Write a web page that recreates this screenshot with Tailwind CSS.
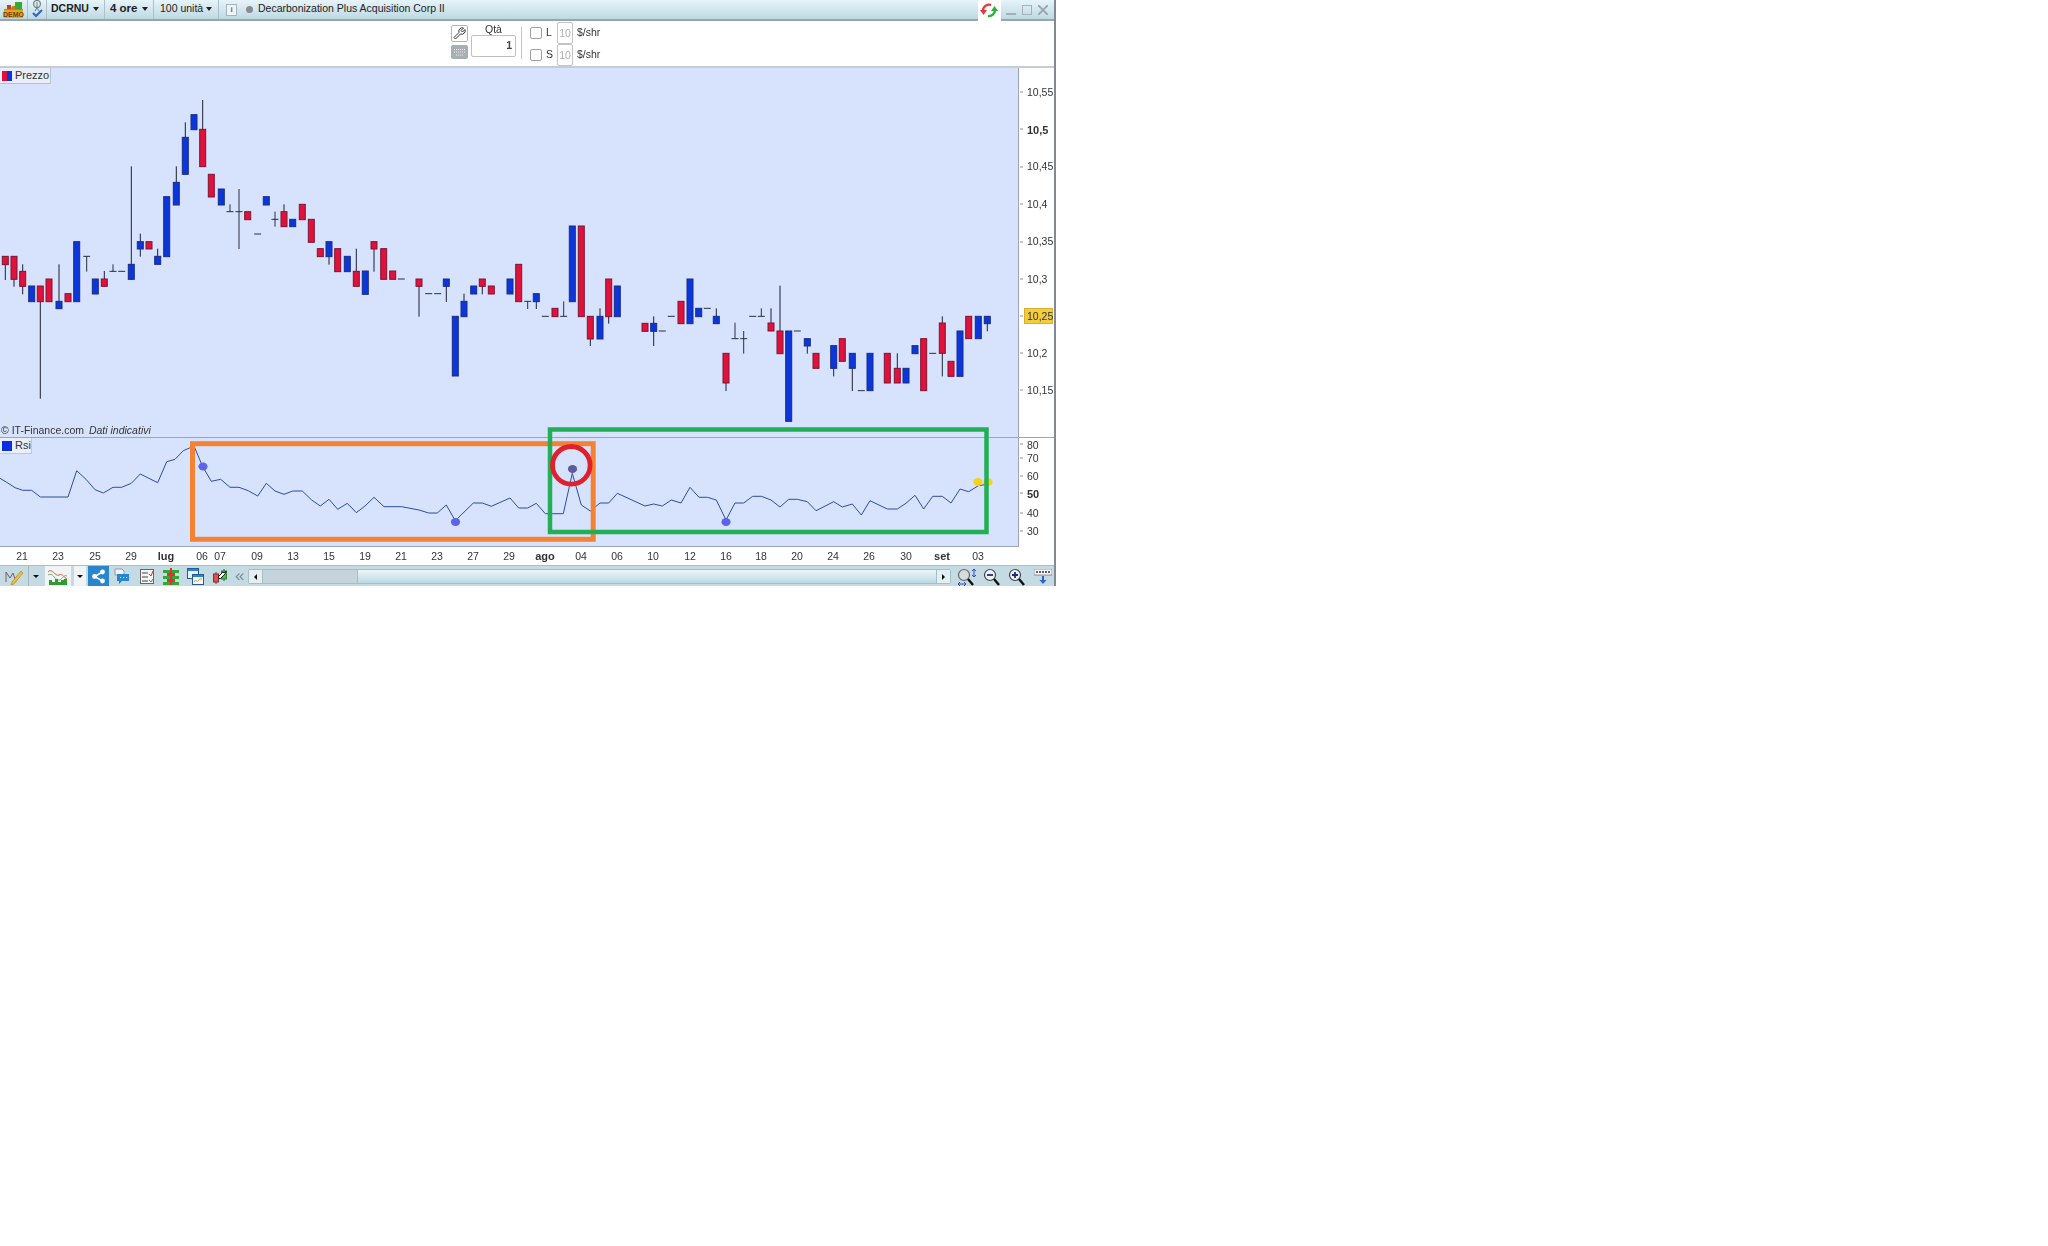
<!DOCTYPE html>
<html lang="it">
<head>
<meta charset="utf-8">
<title>DCRNU</title>
<script src="https://cdn.jsdelivr.net/npm/@tailwindcss/browser@4"></script>
</head>
<body class="bg-white font-['Liberation_Sans',Arial,sans-serif] text-[10.5px] text-[#333]">
<div class="relative w-[1056px] h-[586px] flex flex-col border-r-2 border-[#7f8a92] overflow-hidden blur-[0.35px]">

  <!-- title bar -->
  <div class="h-[21px] shrink-0 flex items-center bg-gradient-to-b from-[#e6f4f9] to-[#bed9e3] border-b-2 border-[#98a5ab] text-[#222]">
    <div class="w-[28px] h-full flex items-center justify-center border-r border-[#aebfc7]">
      <svg width="23" height="18" viewBox="0 0 23 18"><path d="M2 8h7l1-3h3v3h8v9H2z" fill="#b7851c"/><rect x="13" y="1" width="7" height="7" fill="#3aa63a"/><rect x="5" y="4" width="4" height="4" fill="#c83a2a"/><rect x="2" y="9" width="19" height="8" fill="#e0a818"/><text x="11.5" y="15.5" text-anchor="middle" font-size="7" font-weight="700" fill="#7a3a10">DEMO</text></svg>
    </div>
    <div class="w-[19px] h-full flex items-center justify-center border-r border-[#aebfc7]">
      <svg width="13" height="19" viewBox="0 0 13 19"><ellipse cx="6" cy="4" rx="3.4" ry="3.6" fill="none" stroke="#6e7a80" stroke-width="1.2"/><path d="M6 2v5M4 11l2-3 2 3" fill="none" stroke="#6e7a80"/><path d="M2 13l3 3 6-6" fill="none" stroke="#2d62c8" stroke-width="2"/></svg>
    </div>
    <div class="w-[58px] h-full flex items-center border-r border-[#aebfc7] pl-[4px] pb-[2px] font-bold">DCRNU<span class="ml-[4px] w-0 h-0 border-x-[3.5px] border-x-transparent border-t-[4px] border-t-[#222]"></span></div>
    <div class="w-[49px] h-full flex items-center border-r border-[#aebfc7] pl-[5px] pb-[2px] font-bold text-[11.5px]">4 ore<span class="ml-[4px] w-0 h-0 border-x-[3.5px] border-x-transparent border-t-[4px] border-t-[#222]"></span></div>
    <div class="w-[65px] h-full flex items-center border-r border-[#aebfc7] pl-[6px] pb-[2px]">100 unità<span class="ml-[3px] w-0 h-0 border-x-[3.5px] border-x-transparent border-t-[4px] border-t-[#222]"></span></div>
    <div class="ml-[7px] w-[11px] h-[12px] flex items-center justify-center border border-[#a8b4ba] bg-[#eef5f8] text-[8px] font-bold text-[#667]">i</div>
    <div class="ml-[9px] w-[7px] h-[7px] rounded-full bg-[#8a8a92]"></div>
    <div class="ml-[5px] pb-[2px] whitespace-nowrap">Decarbonization Plus Acquisition Corp II</div>
    <div class="flex-1"></div>
    <div class="w-[23px] h-[21px] -mb-[2px] bg-white flex items-center justify-center">
      <svg width="19" height="17" viewBox="0 0 19 17"><path d="M3 9a6 6 0 0 1 8-6" fill="none" stroke="#e23b3b" stroke-width="2.4"/><path d="M0 8h7l-3.5 5z" fill="#e23b3b"/><path d="M15 8a6 6 0 0 1-7 6" fill="none" stroke="#2bb03a" stroke-width="2.4"/><path d="M11 9h7l-3.500-5z" fill="#2bb03a"/></svg>
    </div>
    <div class="w-[5px]"></div>
    <svg width="10" height="10" viewBox="0 0 10 10"><rect x="0" y="8" width="10" height="2" fill="#a6b2b8"/></svg>
    <svg width="10" height="10" viewBox="0 0 10 10" class="ml-[6px]"><rect x=".5" y=".5" width="9" height="9" fill="none" stroke="#a6b2b8"/></svg>
    <svg width="10" height="10" viewBox="0 0 10 10" class="ml-[6px] mr-[6px]"><path d="M0 0l10 10M10 0L0 10" stroke="#98a4aa" stroke-width="1.800"/></svg>
  </div>

  <!-- order bar -->
  <div class="h-[45px] shrink-0 bg-white flex pl-[451px]">
    <div class="flex flex-col pt-[4px] gap-[3px]">
      <div class="w-[17px] h-[17px] border border-[#b5b5b5] rounded-[2px] flex items-center justify-center">
        <svg width="13" height="13" viewBox="0 0 13 13"><path d="M12 2.500 9.500 5 8 3.500 10.500 1a3.500 3.500 0 0 0-4.500 4.500L1 10.500 2.500 12l5-5A3.500 3.500 0 0 0 12 2.500z" fill="#fff" stroke="#333"/></svg>
      </div>
      <div class="w-[17px] h-[14px] bg-[#a8aeb2] rounded-[2px] flex items-center justify-center">
        <svg width="13" height="9" viewBox="0 0 13 9"><path d="M1 1.500h11M1 4h11M3 7h7" stroke="#eef1f3" stroke-dasharray="1 1"/></svg>
      </div>
    </div>
    <div class="ml-[3px] w-[45px] flex flex-col items-center pt-[2px]">
      <div class="h-[12px] leading-[12px]">Qtà</div>
      <div class="w-[45px] h-[22px] border border-[#c0c0c0] rounded-[2px] text-right pr-[3px] leading-[19px] font-bold text-[#444]">1</div>
    </div>
    <div class="ml-[5px] mt-[6px] w-px h-[32px] bg-[#c4c4c4]"></div>
    <div class="ml-[8px] flex flex-col">
      <div class="flex items-center h-[23px] mt-[1px]">
        <div class="w-[12px] h-[12px] border border-[#a0a0a0] rounded-[2px]"></div>
        <div class="ml-[4px] w-[11px]">L</div>
        <div class="w-[16px] h-[22px] border border-[#c4c4c4] rounded-[2px] text-center leading-[20px] text-[#b0b0b0]">10</div>
        <div class="ml-[4px]">$/shr</div>
      </div>
      <div class="flex items-center h-[22px]">
        <div class="w-[12px] h-[12px] border border-[#a0a0a0] rounded-[2px]"></div>
        <div class="ml-[4px] w-[11px]">S</div>
        <div class="w-[16px] h-[22px] border border-[#c4c4c4] rounded-[2px] text-center leading-[20px] text-[#b0b0b0]">10</div>
        <div class="ml-[4px]">$/shr</div>
      </div>
    </div>
  </div>

  <!-- price pane -->
  <div class="h-[371px] shrink-0 flex border-t-2 border-[#c4ccd6]">
    <div class="relative w-[1019px] bg-[#d7e3fc] border-r border-[#9aa6b8]">
      <div class="absolute left-0 top-0 h-[16px] w-[51px] bg-[#e9eef8] border-r border-b border-[#b8c0cc] flex items-center pl-[2px]">
        <span class="w-[10px] h-[10px] bg-gradient-to-r from-[#e0103a] from-50% to-[#0a35d8] to-50%"></span><span class="ml-[3px] text-[11px]">Prezzo</span>
      </div>
      <div class="absolute left-[1px] bottom-0 leading-[13px] whitespace-nowrap">© IT-Finance.com <i class="ml-[2px]">Dati indicativi</i></div>
    </div>
    <div class="relative flex-1">
      <span class="absolute left-[8px] top-[17px]">10,55</span>
      <span class="absolute left-[8px] top-[54px] font-bold text-[11px]">10,5</span>
      <span class="absolute left-[8px] top-[91px]">10,45</span>
      <span class="absolute left-[8px] top-[129px]">10,4</span>
      <span class="absolute left-[8px] top-[166px]">10,35</span>
      <span class="absolute left-[8px] top-[204px]">10,3</span>
      <span class="absolute left-[5px] top-[240px] w-[29px] h-[16px] pl-[2px] leading-[15px] bg-[#f2cc3c] border border-[#d8b030]">10,25</span>
      <span class="absolute left-[8px] top-[278px]">10,2</span>
      <span class="absolute left-[8px] top-[315px]">10,15</span>
    </div>
  </div>

  <!-- RSI pane -->
  <div class="h-[110px] shrink-0 flex border-t border-[#9aa6b8]">
    <div class="relative w-[1019px] bg-[#d7e3fc] border-r border-b border-[#9aa6b8]">
      <div class="absolute left-0 top-0 h-[16px] w-[32px] bg-[#e9eef8] border-r border-b border-[#c0c8d4] flex items-center pl-[2px]">
        <span class="w-[10px] h-[10px] bg-[#0a2fe0]"></span><span class="ml-[3px] text-[11px]">Rsi</span>
      </div>
    </div>
    <div class="relative flex-1">
      <span class="absolute left-[8px] top-[0px]">80</span>
      <span class="absolute left-[8px] top-[13px]">70</span>
      <span class="absolute left-[8px] top-[31px]">60</span>
      <span class="absolute left-[8px] top-[48px] font-bold text-[11px]">50</span>
      <span class="absolute left-[8px] top-[68px]">40</span>
      <span class="absolute left-[8px] top-[86px]">30</span>
    </div>
  </div>

  <!-- date axis -->
  <div class="relative h-[18px] shrink-0 bg-white leading-[18px]">
    <span class="absolute left-[22px] -translate-x-1/2">21</span>
    <span class="absolute left-[58px] -translate-x-1/2">23</span>
    <span class="absolute left-[95px] -translate-x-1/2">25</span>
    <span class="absolute left-[131px] -translate-x-1/2">29</span>
    <span class="absolute left-[166px] -translate-x-1/2 font-bold text-[11px]">lug</span>
    <span class="absolute left-[202px] -translate-x-1/2">06</span>
    <span class="absolute left-[220px] -translate-x-1/2">07</span>
    <span class="absolute left-[257px] -translate-x-1/2">09</span>
    <span class="absolute left-[293px] -translate-x-1/2">13</span>
    <span class="absolute left-[329px] -translate-x-1/2">15</span>
    <span class="absolute left-[365px] -translate-x-1/2">19</span>
    <span class="absolute left-[401px] -translate-x-1/2">21</span>
    <span class="absolute left-[437px] -translate-x-1/2">23</span>
    <span class="absolute left-[473px] -translate-x-1/2">27</span>
    <span class="absolute left-[509px] -translate-x-1/2">29</span>
    <span class="absolute left-[545px] -translate-x-1/2 font-bold text-[11px]">ago</span>
    <span class="absolute left-[581px] -translate-x-1/2">04</span>
    <span class="absolute left-[617px] -translate-x-1/2">06</span>
    <span class="absolute left-[653px] -translate-x-1/2">10</span>
    <span class="absolute left-[690px] -translate-x-1/2">12</span>
    <span class="absolute left-[726px] -translate-x-1/2">16</span>
    <span class="absolute left-[761px] -translate-x-1/2">18</span>
    <span class="absolute left-[797px] -translate-x-1/2">20</span>
    <span class="absolute left-[833px] -translate-x-1/2">24</span>
    <span class="absolute left-[869px] -translate-x-1/2">26</span>
    <span class="absolute left-[906px] -translate-x-1/2">30</span>
    <span class="absolute left-[942px] -translate-x-1/2 font-bold text-[11px]">set</span>
    <span class="absolute left-[978px] -translate-x-1/2">03</span>
  </div>

  <!-- bottom toolbar -->
  <div class="h-[22px] shrink-0 flex items-center bg-[#c4dbe4] border-t border-[#aebcc4]">
    <div class="w-[29px] h-full flex items-center justify-center border-r border-[#a4b4bc]">
      <svg width="19" height="17" viewBox="0 0 19 17"><path d="M1 14V4l4 6 3-5 3 9" fill="none" stroke="#7a5a6a"/><path d="M7 14l9-11 2 2-9 11-3 1z" fill="#e8c040" stroke="#a08020" stroke-width=".6"/></svg>
    </div>
    <div class="w-[14px] flex justify-center"><span class="w-0 h-0 border-x-[3px] border-x-transparent border-t-[3px] border-t-[#111]"></span></div>
    <div class="w-[26px] h-full ml-[2px] bg-[#f0f4f4] flex items-center justify-center">
      <svg width="20" height="17" viewBox="0 0 20 17"><path d="M0 4c4-5 7 5 11 3s5 3 8 4" fill="none" stroke="#c86050"/><path d="M0 7c5-3 6 4 10 5s5-6 9-4" fill="none" stroke="#80a860"/><path d="M1 17v-5h3v2h3v-3h3v3h3v-2h3v-1h3v6z" fill="#2f9a34"/></svg>
    </div>
    <div class="w-[12px] h-full ml-[3px] bg-[#f0f4f4] flex items-center justify-center"><span class="w-0 h-0 border-x-[3px] border-x-transparent border-t-[3px] border-t-[#111]"></span></div>
    <div class="w-[21px] h-full ml-[2px] bg-[#2a86cc] flex items-center justify-center">
      <svg width="15" height="15" viewBox="0 0 15 15"><path d="M11.500 3 3.500 7.500l8 4.500" fill="none" stroke="#fff" stroke-width="1.500"/><circle cx="11.500" cy="3" r="2.400" fill="#fff"/><circle cx="3.500" cy="7.500" r="2.400" fill="#fff"/><circle cx="11.500" cy="12" r="2.400" fill="#fff"/></svg>
    </div>
    <svg width="16" height="17" viewBox="0 0 16 17" class="ml-[5px]"><path d="M1 1h7l2 2v4H1z" fill="#f0f4f8" stroke="#8a9aa8"/><path d="M3 6h12v7H8l-3 3v-3H3z" fill="#2a86cc"/><path d="M6 9.500h1M9 9.500h1M12 9.500h1" stroke="#fff"/></svg>
    <svg width="14" height="15" viewBox="0 0 14 15" class="ml-[10px]"><rect x=".5" y=".5" width="13" height="14" fill="#f4f4f4" stroke="#666"/><path d="M2 4h6M2 8h6M2 12h6" stroke="#444"/><path d="M9 5l2 2 2-5" fill="none" stroke="#d03030"/><path d="M9 11l2 2 2-3" fill="none" stroke="#30a030"/></svg>
    <svg width="16" height="17" viewBox="0 0 16 17" class="ml-[9px]"><path d="M0 2h7v3H0zM9 2h7v3H9zM0 8h7v3H0zM9 8h7v3H9zM0 14h7v3H0zM9 14h7v3H9z" fill="#2eaa38"/><path d="M4 5h8v3H4zM4 11h8v3H4zM7 0h2v17H7z" fill="#e03030"/></svg>
    <svg width="17" height="17" viewBox="0 0 17 17" class="ml-[8px]"><rect x=".5" y=".5" width="11" height="10" fill="#e8f0f8" stroke="#2a5a90"/><rect x="5.500" y="6.500" width="11" height="10" fill="#f4f8fc" stroke="#2a5a90"/><rect x="1" y="1" width="10" height="2" fill="#2a86cc"/><rect x="6" y="7" width="10" height="2" fill="#2a86cc"/><path d="M7 14c2-4 3 1 4-1s2-2 4-2" fill="none" stroke="#c8a030"/></svg>
    <svg width="16" height="17" viewBox="0 0 16 17" class="ml-[8px]"><path d="M4 4v12M12 1v12" stroke="#444"/><rect x="1.500" y="6" width="5" height="8" fill="#e05050" stroke="#803030"/><rect x="9.500" y="3" width="5" height="8" fill="#40c040" stroke="#308030"/><path d="M14 3l-2 2-1-1-5 5 2 2 5-5 1-2z" fill="#fff" stroke="#222"/></svg>
    <div class="ml-[7px] w-[10px] -mt-[3px] text-[17px] leading-[13px] text-[#7d8c96]">«</div>
    <div class="ml-[3px] w-[703px] h-[15px] flex items-stretch border border-[#a8bcc4] rounded-[2px]">
      <div class="w-[14px] bg-[#e4eff3] border-r border-[#a8bcc4] flex items-center justify-center"><span class="w-0 h-0 border-y-[3px] border-y-transparent border-r-[3px] border-r-[#111]"></span></div>
      <div class="w-[95px] bg-[#c4d4da] border-r border-[#a8bcc4]"></div>
      <div class="flex-1 bg-gradient-to-b from-[#eef7f9] to-[#bcd8e0]"></div>
      <div class="w-[14px] bg-[#e4eff3] border-l border-[#a8bcc4] flex items-center justify-center"><span class="w-0 h-0 border-y-[3px] border-y-transparent border-l-[3px] border-l-[#111]"></span></div>
    </div>
    <svg width="20" height="18" viewBox="0 0 20 18" class="ml-[6px]"><circle cx="7" cy="7" r="5.500" fill="#d8dadc" stroke="#666" stroke-width="1.200"/><path d="M11 11l5 6" stroke="#111" stroke-width="2.400"/><path d="M17 1v8M15 3l2-2 2 2M15 7l2 2 2-2M1 16h8M3 14l-2 2 2 2M7 14l2 2-2 2" fill="none" stroke="#2a4ad0"/></svg>
    <svg width="18" height="18" viewBox="0 0 18 18" class="ml-[6px]"><circle cx="7" cy="7" r="5.500" fill="#eef2f4" stroke="#445" stroke-width="1.200"/><path d="M4 7h6" stroke="#1a2a80" stroke-width="1.800"/><path d="M11 11l5 6" stroke="#111" stroke-width="2.400"/></svg>
    <svg width="18" height="18" viewBox="0 0 18 18" class="ml-[7px]"><circle cx="7" cy="7" r="5.500" fill="#eef2f4" stroke="#445" stroke-width="1.200"/><path d="M4 7h6M7 4v6" stroke="#1a2a80" stroke-width="1.800"/><path d="M11 11l5 6" stroke="#111" stroke-width="2.400"/></svg>
    <svg width="18" height="16" viewBox="0 0 18 16" class="ml-[8px]"><rect x="0" y="0" width="18" height="6" fill="#f4f6f8" stroke="#556" stroke-width=".6"/><path d="M2 3h14" stroke="#333" stroke-width="1.400" stroke-dasharray="2 1"/><path d="M9 7v5" stroke="#2a66c8" stroke-width="2"/><path d="M5.500 11h7L9 15z" fill="#2a66c8"/></svg>
  </div>

  <!-- plotted data and annotations lie over the panes -->
  <svg id="plot" class="absolute left-0 top-0 pointer-events-none" width="1056" height="586" viewBox="0 0 1056 586"></svg>
</div>

<script>
// [zoomX, bodyTop, bodyBottom, wickTop, wickBottom, colour]; body values equal => doji dash
const A=[[16,589,614,589,660,'r'],[42,589,658,589,680,'r'],[68,634,679,613,703,'r'],[95,678,725,678,725,'b'],[121,678,725,678,1016,'r'],[147,657,725,657,725,'r'],[177,724,746,613,746,'b'],[204,701,725,701,725,'r'],[230,545,725,545,725,'b'],[260,589,589,589,635,'d'],[286,657,702,657,702,'b'],[313,657,679,633,679,'r'],[339,634,634,613,634,'d'],[365,634,634,634,634,'d'],[394,613,658,319,658,'b'],[421,545,567,521,590,'b'],[447,545,567,545,567,'r'],[473,589,613,566,613,'b'],[500,410,590,410,590,'b'],[529,367,435,319,435,'b'],[556,232,343,187,343,'b'],[582,164,209,164,209,'b'],[608,208,320,120,320,'r'],[634,343,411,343,411,'r'],[664,387,435,387,435,'b'],[690,455,455,433,455,'d'],[717,455,455,387,567,'d'],[743,455,479,455,479,'r'],[773,522,522,522,522,'d'],[799,410,435,410,435,'b'],[825,478,478,455,500,'d'],[852,455,500,433,500,'r'],[878,478,500,478,500,'b'],[907,433,479,433,479,'r'],[934,478,547,478,547,'r'],[961,566,590,566,590,'r'],[987,545,590,545,614,'b'],[1013,566,635,566,635,'r'],[1042,589,635,589,635,'b'],[1069,634,679,566,679,'r']];
const B=[[46,213,283,213,283,'b'],[72,125,147,125,215,'r'],[101,146,238,146,238,'r'],[128,213,238,213,238,'r'],[154,237,237,237,237,'d'],[207,237,259,237,350,'r'],[236,281,281,281,281,'d'],[263,281,281,281,281,'d'],[289,237,259,237,306,'b'],[316,349,528,349,528,'b'],[342,304,350,281,350,'b'],[371,258,282,258,282,'b'],[397,237,259,237,283,'r'],[424,258,282,258,282,'r'],[480,237,282,237,282,'b'],[506,193,305,193,305,'r'],[533,304,304,304,327,'d'],[559,281,305,281,327,'b'],[586,349,349,349,349,'d'],[615,325,350,325,350,'r'],[641,349,349,304,349,'d'],[667,78,305,78,305,'b'],[694,78,350,78,350,'r'],[721,349,417,349,438,'r'],[750,349,417,325,417,'b'],[776,237,350,237,371,'r'],[802,258,350,258,350,'b'],[885,370,394,370,394,'r'],[911,370,394,349,438,'b'],[937,393,393,393,393,'d'],[964,349,349,349,349,'d'],[993,304,371,304,371,'r'],[1020,237,371,237,371,'b'],[1046,325,350,325,350,'b']];
const C=[[22,265,265,265,265,'d'],[49,289,311,265,311,'b'],[78,400,489,400,513,'r'],[105,356,356,308,356,'d'],[131,356,356,333,401,'d'],[158,289,289,289,289,'d'],[184,289,289,265,289,'d'],[213,309,333,265,333,'r'],[240,333,401,197,401,'r'],[266,333,604,333,604,'b'],[292,333,333,333,333,'d'],[322,356,378,356,401,'b'],[348,400,445,400,445,'r'],[401,377,445,377,469,'b'],[427,356,424,356,424,'r'],[457,400,445,400,513,'b'],[484,512,512,512,512,'d'],[510,400,512,400,512,'b'],[562,400,489,400,489,'r'],[592,445,489,400,489,'r'],[618,445,489,445,489,'b'],[645,377,401,377,401,'b'],[671,356,512,356,512,'r'],[698,400,400,400,400,'d'],[727,309,400,289,469,'r'],[753,424,469,424,469,'r'],[780,333,469,333,469,'b'],[806,289,356,289,356,'r'],[835,289,356,289,356,'b'],[862,289,311,289,334,'b']];
const R1=[[0,175],[20,187],[45,203],[68,211],[95,211],[121,231],[204,231],[230,152],[258,178],[285,209],[310,219],[339,202],[365,202],[394,190],[421,162],[473,188],[500,125],[525,118],[550,92],[582,78],[608,140],[634,184],[662,178],[690,202],[717,202],[745,212],[773,228],[799,190],[825,213],[852,223],[878,213],[907,213],[935,240],[961,258],[987,238],[1013,268],[1042,250],[1049,258]];
const R2=[[0,258],[19,278],[45,258],[72,232],[102,260],[155,260],[207,270],[236,279],[262,279],[289,255],[316,302],[370,249],[397,249],[424,259],[480,234],[506,264],[533,264],[559,250],[586,281],[640,281],[667,160],[694,255],[721,273],[750,249],[776,249],[802,220],[885,258],[911,252],[937,258],[964,240],[993,249],[1020,202],[1046,231],[1050,232]];
const R3=[[0,232],[22,232],[49,240],[78,300],[105,249],[131,249],[158,229],[184,229],[213,240],[240,261],[266,238],[292,238],[322,245],[348,272],[401,245],[427,261],[457,252],[484,285],[510,242],[562,267],[592,267],[618,250],[645,226],[671,267],[698,229],[727,229],[753,249],[780,207],[806,215],[835,197],[862,193]];
let s='';
function candles(list,ox,oy){for(const [zx,t,b,wt,wb,c] of list){const x=+(ox+zx/3).toFixed(1),T=oy+t/3,Bt=oy+b/3,WT=oy+wt/3,WB=oy+wb/3;
 if(c==='d'){s+=`<path d="M${x-3.5} ${T}h7" stroke="#2a2d40"/>`;if(WB>WT)s+=`<path d="M${x} ${WT}V${WB}" stroke="#2a2d40"/>`;continue}
 if(WT<T||WB>Bt)s+=`<path d="M${x} ${WT}V${WB}" stroke="#1c1f30"/>`;
 s+=`<rect x="${x-3}" y="${T}" width="6" height="${Bt-T}" fill="${c==='r'?'#e0123c':'#0a36da'}" stroke="${c==='r'?'#7c1434':'#1a2c86'}"/>`}}
candles(A,0,60);candles(B,350,200);candles(C,700,220);
// axis ticks
for(const y of [92,129,167,204,242,279,316,353,390])s+=`<path d="M1020 ${y}h3" stroke="#8a949c"/>`;
for(const y of [444,458,476,493,513,531])s+=`<path d="M1020 ${y}h3" stroke="#8a949c"/>`;
const pts=[...R1.map(p=>[p[0]/3,420+p[1]/3]),...R2.map(p=>[350+p[0]/3,420+p[1]/3]),...R3.map(p=>[700+p[0]/3,420+p[1]/3])];
s+=`<polyline points="${pts.map(p=>p[0].toFixed(1)+','+p[1].toFixed(1)).join(' ')}" fill="none" stroke="#2f4aa0"/>`;
for(const [x,y,c] of [[203,466.5,'#5c62ec'],[455.5,522,'#5c62ec'],[572.5,469,'#5e5a9c'],[726,522,'#5c62ec'],[978,482,'#f4d414'],[988,482,'#f4d414']])s+=`<ellipse cx="${x}" cy="${y}" rx="4.600" ry="4" fill="${c}"/>`;
s+=`<rect x="192.500" y="443.700" width="400.700" height="95.600" fill="none" stroke="#f58233" stroke-width="5"/>`;
s+=`<rect x="550" y="429.500" width="436.500" height="102.500" fill="none" stroke="#22ae55" stroke-width="4.500"/>`;
s+=`<circle cx="571.300" cy="465.300" r="18.800" fill="none" stroke="#e0202c" stroke-width="4.800"/>`;
document.getElementById('plot').innerHTML=s;
</script>
</body>
</html>
